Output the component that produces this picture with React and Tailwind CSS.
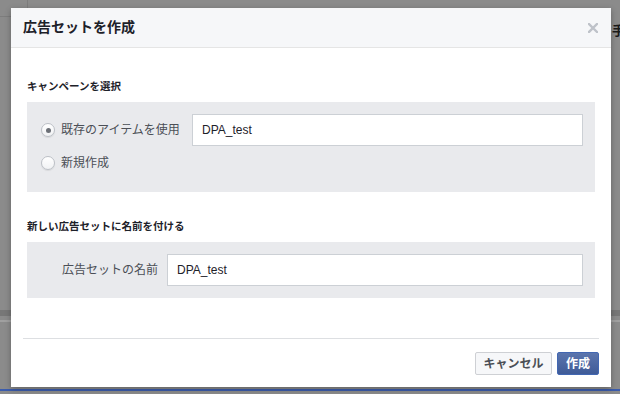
import React from 'react';

const font = { fontFamily: '"Liberation Sans", "Noto Sans CJK JP", sans-serif' };

function Radio({ checked }) {
  return (
    <span className="flex h-[14px] w-[14px] shrink-0 items-center justify-center rounded-full border border-[#bcc0c6] bg-gradient-to-b from-white to-[#f1f2f4] shadow-[0_1px_1px_rgba(0,0,0,0.08)]">
      {checked && <span className="h-[5px] w-[5px] rounded-full bg-[#6b6f76]" />}
    </span>
  );
}

function TextBox({ value }) {
  return (
    <input
      readOnly
      value={value}
      className="h-[32px] flex-1 border border-[#ccd0d5] bg-white px-[9px] text-[12px] text-[#1d2129] outline-none"
      style={font}
    />
  );
}

export default function App() {
  return (
    <div className="relative h-[394px] w-[620px] overflow-hidden bg-[#8b8b8b]" style={font}>
      {/* page behind the overlay */}
      <div className="absolute left-0 top-0 h-[17px] w-[28px] border-b border-r border-[#7d7d7d]" />
      <div className="absolute left-[612px] top-[21px] whitespace-nowrap text-[13px] font-bold text-[#1a1a1a]">手順</div>
      <div className="absolute left-0 top-[310px] h-[6px] w-full bg-[#777]" />
      <div className="absolute left-0 top-[320px] h-[2px] w-full bg-[#a0a0a0]" />
      <div className="absolute left-0 top-[389px] h-[2px] w-full bg-[#3b5cad]" />

      <div className="relative pl-[11px] pt-[8px]">
        <div className="flex h-[379px] w-[600px] flex-col bg-white shadow-[0_2px_6px_rgba(0,0,0,0.3)]">
          {/* header */}
          <div className="flex h-[40px] items-center justify-between border-b border-[#e5e5e5] bg-[#f6f7f9] pl-[12px] pr-[13px]">
            <h1 className="text-[14px] font-bold text-[#1d2129]">広告セットを作成</h1>
            <svg width="10" height="10" viewBox="0 0 10 10">
              <path d="M1 1 L9 9 M9 1 L1 9" stroke="#bec2c9" strokeWidth="2.4" strokeLinecap="square" />
            </svg>
          </div>

          {/* body */}
          <div className="px-[16px] pt-[30px]">
            <div className="h-[16px] text-[10.5px] font-bold leading-[16px] text-[#1d2129]">キャンペーンを選択</div>
            <div className="mt-[8px] bg-[#e9eaed] pb-[19px] pl-[14px] pr-[12px] pt-[12px]">
              <div className="flex h-[32px] items-center">
                <Radio checked />
                <span className="ml-[6px] w-[131px] text-[12px] text-[#4b4f56]">既存のアイテムを使用</span>
                <TextBox value="DPA_test" />
              </div>
              <div className="mt-[7px] flex h-[20px] items-center">
                <Radio />
                <span className="ml-[6px] text-[12px] text-[#4b4f56]">新規作成</span>
              </div>
            </div>

            <div className="mt-[26px] h-[16px] text-[10.5px] font-bold leading-[16px] text-[#1d2129]">新しい広告セットに名前を付ける</div>
            <div className="mt-[8px] flex items-center bg-[#e9eaed] py-[12px] pl-[35px] pr-[12px]">
              <span className="w-[105px] text-[12px] text-[#4b4f56]">広告セットの名前</span>
              <TextBox value="DPA_test" />
            </div>
          </div>

          {/* footer */}
          <div className="mx-[12px] mt-[40px] flex justify-end gap-[5px] border-t border-[#dddfe2] pt-[13px]">
            <button className="h-[23px] w-[77px] rounded-[2px] border border-[#ced0d4] bg-[#f6f7f9] text-[12px] font-bold text-[#4b4f56]">
              キャンセル
            </button>
            <button className="h-[23px] w-[42px] rounded-[2px] border border-[#4267b2] bg-gradient-to-b from-[#5b75ad] to-[#3f5b98] text-[12px] font-bold text-white">
              作成
            </button>
          </div>
        </div>
      </div>
    </div>
  );
}
